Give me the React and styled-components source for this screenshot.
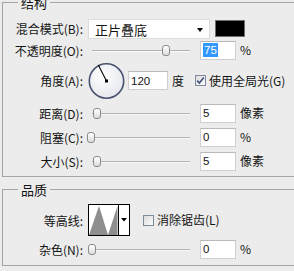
import React from "react";
import styled, { createGlobalStyle } from "styled-components";

const GlobalStyle = createGlobalStyle`
  html, body { margin: 0; padding: 0; background: #ececec; }
  body {
    font-family: "Noto Sans CJK SC", "Noto Sans", sans-serif;
    font-size: 12px;
    color: #141414;
  }
`;

// whole dialog area (cropped)
const Panel = styled.div`
  width: 294px;
  height: 271px;
  overflow: hidden;
  background: #ececec;
  padding-top: 2px;
  box-sizing: border-box;
`;

// etched group box, right edge runs off the crop
const Group = styled.div`
  position: relative;
  margin: ${(p) => p.$mt}px 0 0 2px;
  width: 330px;
  box-sizing: border-box;
  border: 1px solid #a4a4a4;
  padding: ${(p) => p.$pt}px 0 ${(p) => p.$pb}px 0;
`;

// caption sits over the top border
const Legend = styled.span`
  position: absolute;
  top: -7px;
  left: 15px;
  padding: 0 3px;
  background: #ececec;
  font-size: 13px;
  line-height: 13px;
`;

const Row = styled.div`
  display: flex;
  align-items: center;
  height: ${(p) => p.$h}px;
`;

const Label = styled.div`
  width: 81px;
  box-sizing: border-box;
  padding: 1px 1px 0 0;
  margin-right: 4px;
  text-align: right;
  white-space: nowrap;
  line-height: 14px;
`;

const Select = styled.div`
  width: 122px;
  height: 20px;
  box-sizing: border-box;
  background: #fff;
  border: 1px solid #dcdcdc;
  display: flex;
  align-items: center;
  padding: 2px 0 0 6px;
  font-size: 13px;
  line-height: 14px;
`;

const Caret = styled.span`
  margin-left: auto;
  margin-right: 6px;
  width: 0;
  height: 0;
  border-left: 3.5px solid transparent;
  border-right: 3.5px solid transparent;
  border-top: 4px solid #000;
`;

const Swatch = styled.div`
  width: 30px;
  height: 17px;
  box-sizing: border-box;
  margin-left: 5px;
  background: #000;
  border: 1px solid #6e6e6e;
`;

const Slider = styled.div`
  position: relative;
  width: 112px;
  height: 13px;
  flex: none;
  &::before {
    content: "";
    position: absolute;
    left: 4px;
    right: 10px;
    top: 6px;
    height: 1px;
    background: #b2b2b2;
    box-shadow: 0 1px 0 #fafafa;
  }
`;

const Thumb = styled.span`
  position: absolute;
  top: 1px;
  left: ${(p) => p.$at - 88 - 4}px;
  width: 8px;
  height: 11px;
  box-sizing: border-box;
  border: 1px solid #8a8a8a;
  border-radius: 3px;
  background: linear-gradient(#ffffff, #dcdcdc);
`;

const Field = styled.div`
  width: ${(p) => p.$w || 36}px;
  height: 19px;
  flex: none;
  box-sizing: border-box;
  margin-left: ${(p) => p.$ml || 0}px;
  background: #fff;
  border: 1px solid #cfcfcf;
  border-top-color: #b9b9b9;
  display: flex;
  align-items: center;
  padding-left: 2px;
  font-family: "Liberation Sans", Arial, sans-serif;
  font-size: 11.5px;
`;

const Selected = styled.span`
  background: #3399ff;
  color: #fff;
  padding: 1px 1px;
`;

const Unit = styled.span`
  margin-left: ${(p) => p.$ml || 4}px;
  line-height: 14px;
  white-space: nowrap;
`;

const Check = styled.span`
  width: 11px;
  height: 11px;
  flex: none;
  box-sizing: border-box;
  margin-left: ${(p) => p.$ml}px;
  border: 1px solid #7f8a9c;
  background: linear-gradient(135deg, #dcdcdc, #fbfbfb);
  display: flex;
  align-items: center;
  justify-content: center;
`;

const CheckText = styled.span`
  margin-left: 3px;
  white-space: nowrap;
  line-height: 14px;
`;

const Dial = () => (
  <svg width="37" height="38" viewBox="0 0 37 38" style={{ flex: "none" }}>
    <defs>
      <radialGradient id="dialFill" cx="40%" cy="35%" r="70%">
        <stop offset="0%" stopColor="#ffffff" />
        <stop offset="100%" stopColor="#e4e6ec" />
      </radialGradient>
    </defs>
    <circle cx="18.5" cy="19" r="17.2" fill="url(#dialFill)" stroke="#4a5470" strokeWidth="1.6" />
    <line x1="18.5" y1="19" x2="10.3" y2="3" stroke="#000" strokeWidth="1.1" />
    <rect x="17" y="17.5" width="3" height="3" fill="#000" />
  </svg>
);

const CheckMark = () => (
  <svg width="9" height="9" viewBox="0 0 9 9">
    <path d="M1.2 4.6 L3.4 7 L7.8 1.6" fill="none" stroke="#41507a" strokeWidth="1.6" />
  </svg>
);

const Contour = () => (
  <svg width="42" height="32" viewBox="0 0 42 32" style={{ flex: "none" }}>
    <rect x="0.5" y="0.5" width="41" height="31" fill="#fff" stroke="#000" />
    <polygon points="1,31 11,2 20,31" fill="#8e8e8e" />
    <polygon points="20,31 29.5,2 29.5,31" fill="#8e8e8e" />
    <line x1="30.5" y1="1" x2="30.5" y2="31" stroke="#000" />
    <polygon points="33,14 39,14 36,17.5" fill="#000" />
  </svg>
);

const SliderRow = ({ label, at, value, unit, h = 24 }) => (
  <Row $h={h}>
    <Label>{label}</Label>
    <Slider>
      <Thumb $at={at} />
    </Slider>
    <Field>{value}</Field>
    <Unit>{unit}</Unit>
  </Row>
);

export default function App() {
  return (
    <Panel>
      <GlobalStyle />
      <Group $mt={0} $pt={14} $pb={3}>
        <Legend>结构</Legend>
        <Row $h={23}>
          <Label>混合模式(B):</Label>
          <Select>
            正片叠底
            <Caret />
          </Select>
          <Swatch />
        </Row>
        <Row $h={20}>
          <Label>不透明度(O):</Label>
          <Slider>
            <Thumb $at={166} />
          </Slider>
          <Field>
            <Selected>75</Selected>
          </Field>
          <Unit>%</Unit>
        </Row>
        <Row $h={41}>
          <Label>角度(A):</Label>
          <Dial />
          <Field $w={40} $ml={3}>120</Field>
          <Unit>度</Unit>
          <Check $ml={11}>
            <CheckMark />
          </Check>
          <CheckText>使用全局光(G)</CheckText>
        </Row>
        <SliderRow label="距离(D):" at={97} value="5" unit="像素" />
        <SliderRow label="阻塞(C):" at={91} value="0" unit="%" />
        <SliderRow label="大小(S):" at={97} value="5" unit="像素" />
      </Group>
      <Group $mt={12} $pt={14} $pb={3}>
        <Legend>品质</Legend>
        <Row $h={32}>
          <Label>等高线:</Label>
          <Contour />
          <Check $ml={13} />
          <CheckText>消除锯齿(L)</CheckText>
        </Row>
        <SliderRow label="杂色(N):" at={92} value="0" unit="%" h={26} />
      </Group>
    </Panel>
  );
}
